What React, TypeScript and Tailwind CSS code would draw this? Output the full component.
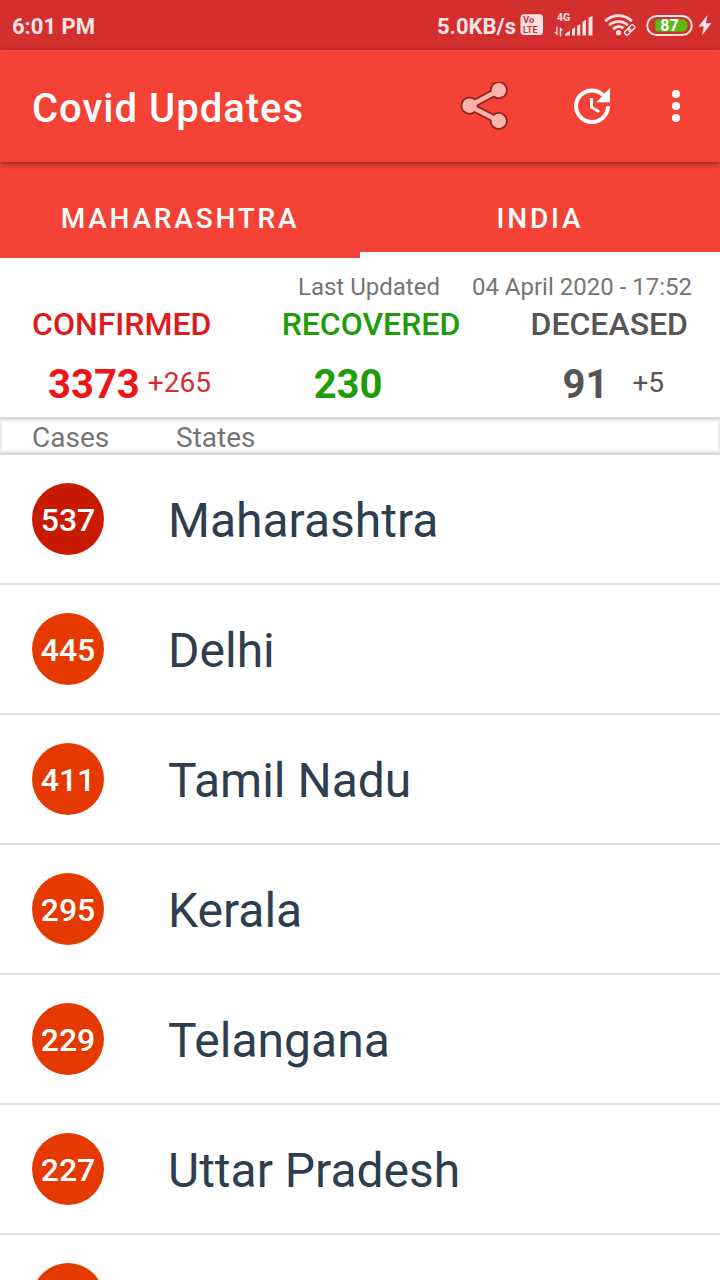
import React from "react";

type StateRow = { name: string; cases: string; high?: boolean };

const states: StateRow[] = [
  { name: "Maharashtra", cases: "537", high: true },
  { name: "Delhi", cases: "445" },
  { name: "Tamil Nadu", cases: "411" },
  { name: "Kerala", cases: "295" },
  { name: "Telangana", cases: "229" },
  { name: "Uttar Pradesh", cases: "227" },
  { name: "", cases: "" },
];

function VolteIcon() {
  return (
    <svg width="24" height="24" viewBox="0 0 24 24" aria-hidden="true">
      <rect x="0.5" y="1.3" width="22.5" height="20.7" rx="3.5" fill="#fbe3e3" />
      <text x="3" y="10" fontSize="9.5" fontWeight="700" fill="#d32f2f">Vo</text>
      <text x="3" y="20.3" fontSize="9" fontWeight="700" fill="#d32f2f">LTE</text>
    </svg>
  );
}

function SignalIcon() {
  return (
    <svg width="40" height="28" viewBox="0 0 40 28" fill="#fbe3e3" aria-hidden="true">
      <text x="3" y="10" fontSize="10.5" fontWeight="700">4G</text>
      <path d="M2.2 24.5V21H.2l3.400 3.700V15.500H2.200zM5.800 16v9.500h1.400v-6h2z" />
      <path d="M11 24.500v-1.200l5-3.800v5zM18 24.500v-6.200l3-2v8.200zM23.200 24.500V14.800l3-1.900v11.600zM28.500 24.500V11l3.500-2.400v15.900zM34.500 24.500V6.700L38.500 5v19.500z" />
    </svg>
  );
}

function WifiIcon() {
  return (
    <svg width="32" height="24" viewBox="0 0 32 24" fill="none" stroke="#fbe3e3" aria-hidden="true">
      <path d="M1.200 8.200C8.800.8 20.200.8 27.800 8.200" strokeWidth="2.800" />
      <path d="M5.200 12.200c5.200-4.800 13.400-4.800 18.600 0" strokeWidth="2.800" />
      <path d="M9 16.100c3-2.700 7-3.100 10.500-.9" strokeWidth="2.800" />
      <circle cx="14.500" cy="19.700" r="2.600" fill="#fbe3e3" stroke="none" />
      <g transform="rotate(-45 25.500 17)" strokeWidth="1.400">
        <rect x="19.500" y="14.800" width="7.200" height="4.400" rx="2.200" />
        <rect x="24.500" y="14.800" width="7.200" height="4.400" rx="2.200" />
      </g>
    </svg>
  );
}

function BatteryIcon() {
  return (
    <svg width="48" height="24" viewBox="0 0 48 24" aria-hidden="true">
      <rect x="1.200" y="3" width="44.600" height="19" rx="9.500" fill="none" stroke="#fbe3e3" strokeWidth="1.900" />
      <rect x="7" y="5.500" width="36" height="14" rx="7" fill="#a8501f" />
      <path d="M11.500 6.500H38q3.500 2 3.500 6t-3.500 6H11.500a2 2 0 0 1-2-2v-8a2 2 0 0 1 2-2z" fill="#5fb81a" />
      <text x="23.500" y="18.300" fontSize="16" fontWeight="700" fill="#fff" textAnchor="middle">87</text>
    </svg>
  );
}

function BoltIcon() {
  return (
    <svg width="14" height="24" viewBox="0 0 14 24" fill="#fbe3e3" aria-hidden="true">
      <path d="M9.500 2L.5 13.500h5.200L4 22.500l9.300-12.300H7.900z" />
    </svg>
  );
}

function ShareIcon() {
  return (
    <svg width="48" height="48" viewBox="0 0 48 48" aria-hidden="true">
      <g stroke="#8f231b" fill="#8f231b">
        <path d="M38.800 8.300L9.500 24l29.300 15" fill="none" strokeWidth="8" />
        <circle cx="38.800" cy="8.200" r="9" stroke="none" />
        <circle cx="9.500" cy="23.700" r="9" stroke="none" />
        <circle cx="38.800" cy="39" r="9" stroke="none" />
      </g>
      <g stroke="#ffb3ad" fill="#ffb3ad">
        <path d="M38.800 8.300L9.500 24l29.300 15" fill="none" strokeWidth="4.500" />
        <circle cx="38.800" cy="8.200" r="7.200" stroke="none" />
        <circle cx="9.500" cy="23.700" r="7.200" stroke="none" />
        <circle cx="38.800" cy="39" r="7.200" stroke="none" />
      </g>
    </svg>
  );
}

function UpdateIcon() {
  return (
    <svg width="48" height="48" viewBox="0 0 24 24" fill="#fff" aria-hidden="true">
      <path d="M21 10.120h-6.780l2.740-2.820c-2.730-2.700-7.150-2.800-9.880-.1-2.730 2.710-2.730 7.080 0 9.790s7.150 2.710 9.880 0C18.320 15.650 19 14.080 19 12.100h2c0 1.980-.88 4.550-2.640 6.290-3.510 3.480-9.210 3.480-12.720 0-3.500-3.470-3.530-9.110-.02-12.580s9.140-3.470 12.650 0L21 3v7.120zM12.500 8v4.250l3.500 2.080-.72 1.210L11 13V8h1.500z" />
    </svg>
  );
}

function MoreIcon() {
  return (
    <svg width="48" height="48" viewBox="0 0 24 24" fill="#fff" aria-hidden="true">
      <circle cx="12" cy="6" r="2" />
      <circle cx="12" cy="12" r="2" />
      <circle cx="12" cy="18" r="2" />
    </svg>
  );
}

export default function App() {
  return (
    <div className="flex h-screen flex-col overflow-hidden bg-white font-['Roboto',sans-serif]">
      <div className="flex h-[50px] shrink-0 items-center justify-between bg-[#d32f2f] px-2 pl-3 text-[22px] font-bold text-[#fbe3e3]">
        <span className="pt-0.5">6:01 PM</span>
        <div className="flex items-center">
          <span className="mr-1 pt-0.5">5.0KB/s</span>
          <VolteIcon />
          <span className="ml-2.5"><SignalIcon /></span>
          <span className="ml-2.5"><WifiIcon /></span>
          <span className="ml-2.5"><BatteryIcon /></span>
          <span className="ml-1"><BoltIcon /></span>
        </div>
      </div>

      <header className="relative z-10 flex h-28 shrink-0 items-center bg-[#f44336] pr-5 pl-8 shadow-[0_2px_6px_rgba(0,0,0,0.4)]">
        <h1 className="grow pt-1.5 text-[40px] leading-12 font-medium tracking-wide text-white">Covid Updates</h1>
        <button type="button" aria-label="Share" className="mr-15"><ShareIcon /></button>
        <button type="button" aria-label="Refresh" className="mr-9"><UpdateIcon /></button>
        <button type="button" aria-label="More options"><MoreIcon /></button>
      </header>

      <div role="tablist" className="grid h-24 shrink-0 grid-cols-2 bg-[#f44336] text-[28px] font-medium tracking-widest text-white">
        <button type="button" role="tab" aria-selected="false" className="border-b-6 border-transparent pt-6">
          MAHARASHTRA
        </button>
        <button type="button" role="tab" aria-selected="true" className="border-b-6 border-white pt-6">
          INDIA
        </button>
      </div>

      <section className="shrink-0 pt-3 pb-2">
        <div className="flex justify-end gap-8 pt-px pr-7 text-2xl text-[#757575]">
          <span>Last Updated</span>
          <span>04 April 2020 - 17:52</span>
        </div>
        <div className="flex justify-between px-8">
          <div className="text-[#ec1616]">
            <h2 className="text-[32px] leading-[42px] font-medium text-[#e01b1b]">CONFIRMED</h2>
            <p className="mt-4 flex items-center gap-2 pl-4">
              <span className="text-[40px] leading-12 font-bold">3373</span>
              <span className="pb-1 text-[28px] leading-10 text-[#d32f2f]">+265</span>
            </p>
          </div>
          <div className="text-[#1e9c0a]">
            <h2 className="text-[32px] leading-[42px] font-medium">RECOVERED</h2>
            <p className="mt-4 pl-8">
              <span className="text-[40px] leading-12 font-bold">230</span>
            </p>
          </div>
          <div className="text-[#555555]">
            <h2 className="text-[32px] leading-[42px] font-medium">DECEASED</h2>
            <p className="mt-4 flex items-center gap-6 pl-8">
              <span className="text-[40px] leading-12 font-bold">91</span>
              <span className="pb-1 text-[28px] leading-10">+5</span>
            </p>
          </div>
        </div>
      </section>

      <table className="block w-full">
        <thead className="block border-y-2 border-[#d9d9d9]">
          <tr className="flex h-[34px] items-center border-2 border-[#e9e9e9] pt-1 pl-[30px] text-[28px] leading-8 text-[#757575]">
            <th scope="col" className="w-36 text-left font-normal">Cases</th>
            <th scope="col" className="text-left font-normal">States</th>
          </tr>
        </thead>
        <tbody className="block">
          {states.map((row, i) => (
            <tr key={i} className="flex h-[130px] items-center border-b-2 border-[#dfdfdf] px-8">
              <td className="w-34">
                <span
                  className={
                    row.high
                      ? "flex size-18 items-center justify-center rounded-full bg-[#c81a00] pt-0.5 text-[32px] font-medium text-white"
                      : "flex size-18 items-center justify-center rounded-full bg-[#e63900] pt-0.5 text-[32px] font-medium text-white"
                  }
                >
                  {row.cases}
                </span>
              </td>
              <td className="pt-1 text-5xl text-[#2c3e50]">{row.name}</td>
            </tr>
          ))}
        </tbody>
      </table>
    </div>
  );
}
